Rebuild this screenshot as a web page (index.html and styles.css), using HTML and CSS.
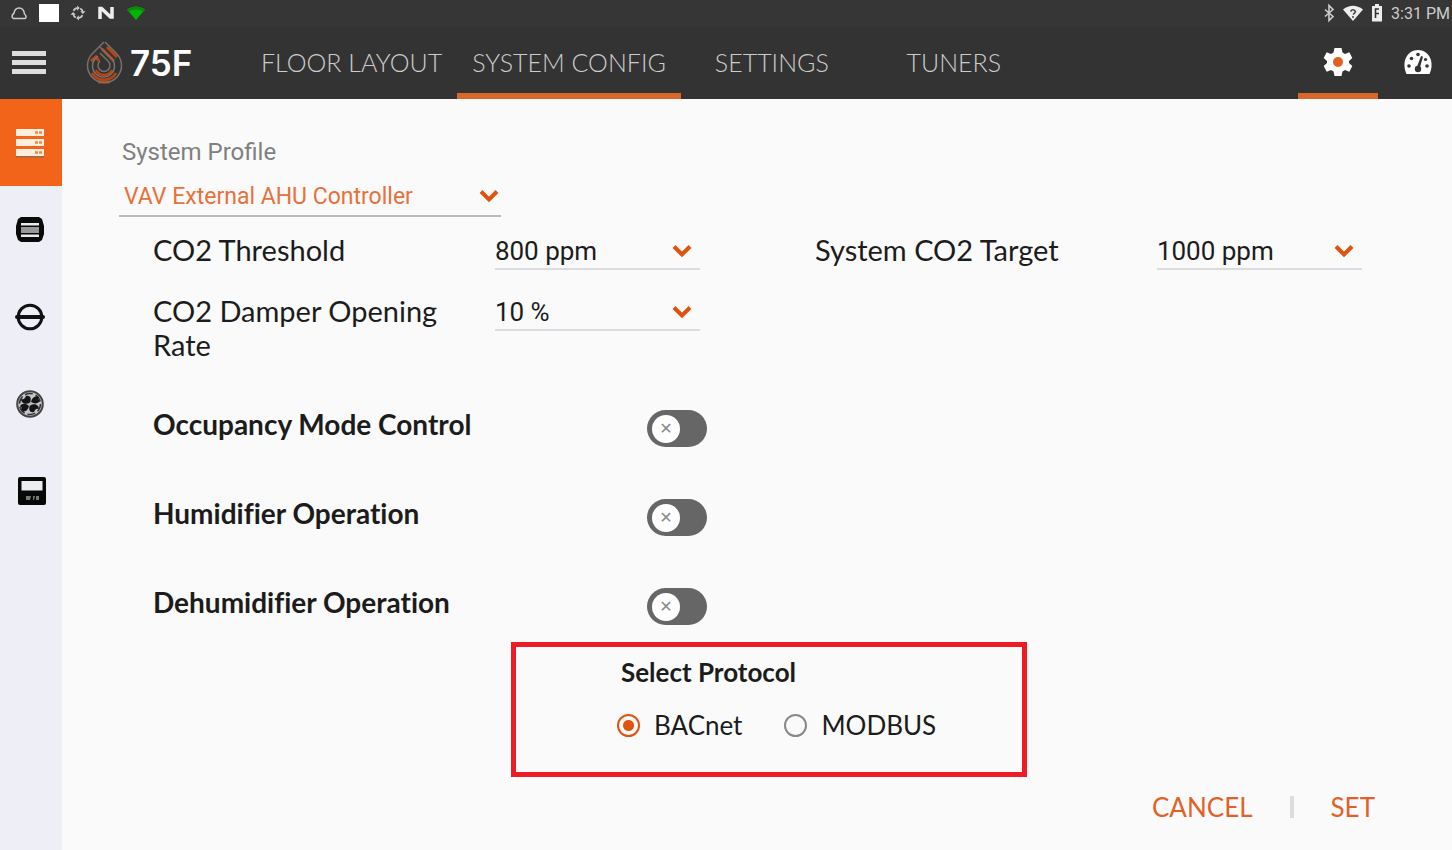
FILE: index.html
```
<!DOCTYPE html>
<html lang="en">
<head>
    <meta charset="utf-8">
    <title>System Config</title>
    <link rel="stylesheet" href="styles.css">
</head>
<body>
    <header>
        <div class="status-bar">
            <div class="status-group">
                <svg width="18" height="18" viewBox="0 0 18 18" fill="none" stroke="#ccc" stroke-width="1.5"><path d="M3.500 14.500h11.500c1.500-.5 1.500-3-.5-4.500C14 6 12 4 9 4S4.500 6 3.800 9.500c-2.300 1.500-2.300 4-.3 5z"/></svg>
                <svg width="20" height="18" viewBox="0 0 20 18"><path d="M0 0h20v18H0z" fill="#fff"/></svg>
                <svg width="16" height="18" viewBox="0 0 18 18" fill="none" stroke="#ccc" stroke-width="2"><path d="M4 6.500C5 4.500 6.500 3.500 8 3.500M11.500 4c1.500.8 2.500 2 2.800 3.500M14 11.500c-1 2-2.500 3-4 3M6.500 14C5 13.200 4 12 3.700 10.500"/><path d="M8 .5l3 3-3 3zM17.500 7l-3 3-3-3zM10 17.500l-3-3 3-3zM.5 11l3-3 3 3z" fill="#ccc" stroke="none"/></svg>
                <svg width="18" height="18" viewBox="0 0 18 18" fill="none" stroke="#eee" stroke-width="3.500"><path d="M3 15V4.500h1.500l9 8.500H15V3"/></svg>
                <svg width="20" height="18" viewBox="0 0 20 18"><path d="M1 5.500Q10-.5 19 5.500L10 16z" fill="#04b404"/><path d="M1 5.500Q10-.5 19 5.500l-2 2.300Q10 3 3 7.800z" fill="#0a8a0a"/></svg>
            </div>
            <div class="status-group right">
                <svg width="12" height="18" viewBox="0 0 12 18" fill="none" stroke="#ccc" stroke-width="1.600"><path d="M2 5.500l8 7-4 4v-15l4 4-8 7"/></svg>
                <svg width="20" height="18" viewBox="0 0 20 18"><path d="M0 5.500Q10-2 20 5.500L10 17z" fill="#eee"/><path d="M7.500 7.500Q10 4 12.500 7.500 12 9 10 10.500M10 12v2" fill="none" stroke="#444" stroke-width="1.500"/></svg>
                <svg width="12" height="18" viewBox="0 0 12 18"><path d="M1 2h3V0h4v2h3v15.500H1z" fill="#eee"/><path d="M8 5H4.500v4.500H8M4.500 9.500V14" fill="none" stroke="#333" stroke-width="1.600"/></svg>
                <span>3:31 PM</span>
            </div>
        </div>
        <div class="toolbar">
            <button class="menu" aria-label="Menu"><span></span><span></span><span></span></button>
            <a class="logo" href="#">
                <svg width="36" height="44" viewBox="0 0 36 44" fill="none">
                    <g stroke="#bd4212">
                        <path d="M15 8l12 12M20 6l10 10" stroke-width="3"/>
                        <path d="M4 20l5-4 3 4" stroke-width="3"/>
                        <path d="M5 32a14 14 0 0 0 24 0M9 29a9 9 0 0 0 16 0" stroke-width="2.500"/>
                        <path d="M11 41h12" stroke-width="3"/>
                    </g>
                    <g stroke="#77706c" stroke-width="1.500">
                        <path d="M17 1L6 12a17 17 0 1 0 23 0L18 1"/>
                        <path d="M13 6l12 12a11 11 0 1 1-17 0l3-3"/>
                        <path d="M13 12l8 8a6 6 0 1 1-8 0"/>
                    </g>
                </svg>
                <span>75F</span>
            </a>
            <nav class="tabs">
                <a href="#">FLOOR LAYOUT</a>
                <a href="#" class="active">SYSTEM CONFIG</a>
                <a href="#">SETTINGS</a>
                <a href="#">TUNERS</a>
            </nav>
            <div class="actions">
                <button class="active" aria-label="Configuration">
                    <svg width="28" height="28" viewBox="0 0 28 28"><path d="M10.500 0h7l1 4.500 2.500 1.500 4.300-1.700 3 5.700L25 13v2l3.300 3-3 5.700L21 22l-2.500 1.500-1 4.500h-7l-1-4.500L7 22l-4.300 1.700-3-5.700L3 15v-2l-3.300-3 3-5.700L7 6l2.500-1.500z" fill="#fff"/><circle cx="14" cy="14" r="5" fill="#e0601f"/></svg>
                </button>
                <button aria-label="Dashboard">
                    <svg width="28" height="24" viewBox="0 0 28 24"><path d="M2.500 24C-3 12 3 0 14 0s17 12 11.500 24z" fill="#fff"/><g fill="#333"><circle cx="5" cy="16" r="1.800"/><circle cx="7.500" cy="8.500" r="1.800"/><circle cx="14" cy="4.500" r="1.800"/><circle cx="23" cy="16" r="1.800"/><circle cx="21.500" cy="9.500" r="1.600"/><circle cx="14" cy="19" r="3.200"/><path d="M12.500 18l4.500-12 2 .7L15.500 19z"/></g></svg>
                </button>
            </div>
        </div>
    </header>

    <div class="page">
        <nav class="sidebar">
            <a href="#" class="active" aria-label="System">
                <svg width="28" height="30" viewBox="0 0 28 30"><path d="M0 1h28v7H0zM0 11h28v7H0zM0 21h28v7H0z" fill="#ffeede"/><path d="M0 28h28v1.500H0z" fill="#9b6b45"/><path d="M19 4.500h3m1 0h3M19 14.500h3m1 0h3M19 24.500h3m1 0h3" stroke="#e58b4e" stroke-width="2.500"/></svg>
            </a>
            <a href="#" aria-label="Equipment">
                <svg width="28" height="28" viewBox="0 0 28 28"><path d="M5 1h18l3 2 2 7v8l-2 6-3 2H5l-3-2-2-6v-8l2-7z" fill="#0a0a0a"/><path d="M5 7h18v2.500H5zM5 18.500h18V21H5z" fill="#e8eaec"/><path d="M5 11h18v6H5z" fill="#999"/></svg>
            </a>
            <a href="#" aria-label="Damper">
                <svg width="28" height="28" viewBox="0 0 28 28" fill="none" stroke="#111"><circle cx="14" cy="14" r="11.800" stroke-width="3"/><path d="M1 14h26" stroke-width="4" stroke-linecap="round"/></svg>
            </a>
            <a href="#" aria-label="Fan">
                <svg width="28" height="28" viewBox="0 0 28 28"><circle cx="14" cy="14" r="12.800" fill="#c6c6ca" stroke="#444" stroke-width="2"/><circle cx="14" cy="14" r="10.500" fill="none" stroke="#333" stroke-width="1.500" stroke-dasharray="8 3"/><path d="M14 13C9 15 5 13 5 9c3 1 4-1 5-3 4-1 6 2 4 7zM15 12c1-5 5-7 8-5-1 2-1 3 1 4-2 3-6 3-9 1zM14 15c5-2 9 0 9 4-3-1-4 1-5 3-4 1-6-2-4-7zM13 16c-1 5-5 7-8 4 1-1 1-3-1-4 2-3 6-3 9 0z" fill="#151515"/><circle cx="14" cy="14" r="1.500" fill="#bbb"/></svg>
            </a>
            <a href="#" class="thermostat" aria-label="Thermostat">
                <svg width="28" height="28" viewBox="0 0 28 28"><rect width="28" height="28" rx="2" fill="#080808"/><path d="M3.500 4h21v9.500h-21z" fill="#eceef2"/><path d="M8 19h5l-1 4H8zM15 19h2l-1 4h-1zM18 19h3v4h-3z" fill="#777"/></svg>
            </a>
        </nav>

        <main>
            <div class="profile">
                <label for="profile">System Profile</label>
                <div class="select-box">
                    <select id="profile"><option>VAV External AHU Controller</option></select>
                    <svg class="chevron" width="20" height="14" viewBox="0 0 20 14"><path d="M2 2.500l8 8 8-8"/></svg>
                </div>
            </div>

            <div class="settings">
                <div class="field">
                    <label for="threshold">CO2 Threshold</label>
                    <div class="select-box">
                        <select id="threshold"><option>800 ppm</option></select>
                        <svg class="chevron" width="20" height="14" viewBox="0 0 20 14"><path d="M2 2.500l8 8 8-8"/></svg>
                    </div>
                </div>
                <div class="field">
                    <label for="target">System CO2 Target</label>
                    <div class="select-box">
                        <select id="target"><option>1000 ppm</option></select>
                        <svg class="chevron" width="20" height="14" viewBox="0 0 20 14"><path d="M2 2.500l8 8 8-8"/></svg>
                    </div>
                </div>
                <div class="field">
                    <label for="rate">CO2 Damper Opening Rate</label>
                    <div class="select-box">
                        <select id="rate"><option>10 %</option></select>
                        <svg class="chevron" width="20" height="14" viewBox="0 0 20 14"><path d="M2 2.500l8 8 8-8"/></svg>
                    </div>
                </div>
            </div>

            <div class="toggles">
                <div class="toggle-row">
                    <label for="occupancy">Occupancy Mode Control</label>
                    <input type="checkbox" class="toggle" id="occupancy">
                </div>
                <div class="toggle-row">
                    <label for="humidifier">Humidifier Operation</label>
                    <input type="checkbox" class="toggle" id="humidifier">
                </div>
                <div class="toggle-row">
                    <label for="dehumidifier">Dehumidifier Operation</label>
                    <input type="checkbox" class="toggle" id="dehumidifier">
                </div>
            </div>

            <div class="protocol" role="radiogroup" aria-labelledby="protocol-title">
                <h3 id="protocol-title">Select Protocol</h3>
                <div class="options">
                    <label><input type="radio" name="protocol" checked>BACnet</label>
                    <label><input type="radio" name="protocol">MODBUS</label>
                </div>
            </div>

            <div class="buttons">
                <button>CANCEL</button>
                <span class="divider"></span>
                <button>SET</button>
            </div>
        </main>
    </div>
</body>
</html>
```
FILE: styles.css
```
* {
    margin: 0;
    padding: 0;
    box-sizing: border-box;
}

body {
    min-height: 100vh;
    display: flex;
    flex-direction: column;
    background: #fafafa;
    color: #1c1c1c;
    font-family: Lato, sans-serif;
    font-variant-ligatures: none;
}

svg {
    display: block;
    overflow: visible;
}

a {
    text-decoration: none;
}

button {
    background: none;
    border: none;
    font-family: inherit;
    cursor: pointer;
}

/* header */
header {
    background: #333;
}

.status-bar {
    height: 26px;
    padding: 0 2px 0 10px;
    display: flex;
    align-items: center;
    justify-content: space-between;
    background: #363636;
}

.status-group {
    display: flex;
    align-items: center;
    gap: 11px;
}

.status-group.right {
    gap: 8px;
    color: #ccc;
    font: 16px Roboto, sans-serif;
}

.toolbar {
    height: 73px;
    display: flex;
    align-items: stretch;
}

.menu {
    width: 46px;
    padding-left: 12px;
    display: flex;
    flex-direction: column;
    justify-content: center;
    gap: 4px;
}

.menu span {
    height: 5px;
    background: #ddd;
}

.logo {
    width: 200px;
    padding-left: 41px;
    display: flex;
    align-items: center;
    gap: 7px;
    color: #fff;
    font: 600 35px Inter, sans-serif;
}

.tabs {
    display: flex;
}

.tabs a {
    min-width: 182px;
    padding: 0 15px;
    border-bottom: 6px solid transparent;
    color: #ccc;
    font-size: 25px;
    font-weight: 300;
    line-height: 72px;
    text-align: center;
}

.tabs .active,
.actions .active {
    border-color: #d9672b;
}

.actions {
    margin-left: auto;
    display: flex;
}

.actions button {
    width: 80px;
    padding-top: 4px;
    display: flex;
    align-items: center;
    justify-content: center;
    border-bottom: 6px solid transparent;
}

.actions button:last-child {
    width: 74px;
    padding-left: 6px;
}

/* sidebar */
.page {
    flex: 1;
    display: flex;
}

.sidebar {
    width: 62px;
    background: #eeeff6;
}

.sidebar a {
    height: 87px;
    padding-right: 2px;
    display: flex;
    align-items: center;
    justify-content: center;
}

.sidebar .active {
    background: #f26419;
}

.sidebar .thermostat {
    padding-left: 4px;
}

/* content */
main {
    flex: 1;
    padding: 36px 77px 22px 57px;
    display: flex;
    flex-direction: column;
}

.profile {
    max-width: 382px;
}

.profile label {
    display: block;
    padding-left: 3px;
    color: #808080;
    font: 24px/34px Roboto, sans-serif;
}

.select-box {
    display: grid;
    align-items: center;
    border-bottom: 2px solid #dcdce0;
}

.select-box select,
.select-box .chevron {
    grid-area: 1 / 1;
}

.select-box select {
    width: 100%;
    height: 35px;
    appearance: none;
    background: none;
    border: none;
    color: #1c1c1c;
    font: 26px Roboto, sans-serif;
}

.chevron {
    justify-self: end;
    margin-right: 8px;
    pointer-events: none;
    fill: none;
    stroke: #e0530f;
    stroke-width: 4;
}

.profile .select-box {
    padding-top: 8px;
    border-color: #bbb;
}

.profile select {
    height: 38px;
    padding-left: 5px;
    color: #e8703a;
    font-size: 23px;
}

.profile .chevron {
    margin-right: 2px;
}

.settings {
    margin: 16px 13px 0 34px;
    display: grid;
    grid-template-columns: 1fr 1fr;
    gap: 24px 115px;
}

.field {
    display: grid;
    grid-template-columns: 5fr 3fr;
    align-items: start;
}

.field label {
    padding-right: 50px;
    font-size: 29px;
    line-height: 34px;
}

.toggles {
    max-width: 554px;
    margin: 47px 0 0 34px;
    display: flex;
    flex-direction: column;
    gap: 50px;
}

.toggle-row {
    display: flex;
    align-items: center;
    justify-content: space-between;
}

.toggle-row label {
    padding-bottom: 8px;
    font-size: 28px;
    font-weight: 700;
    line-height: 31px;
}

.toggle {
    width: 60px;
    height: 37px;
    padding-left: 5px;
    appearance: none;
    display: flex;
    align-items: center;
    background: #666;
    border-radius: 19px;
}

.toggle::before {
    content: "✕";
    width: 28px;
    height: 28px;
    background: #fff;
    border-radius: 50%;
    color: #888;
    font: 16px/28px "DejaVu Sans", sans-serif;
    text-align: center;
}

.toggle:checked {
    padding-left: 27px;
    background: #e0530f;
}

.protocol {
    width: 516px;
    min-height: 135px;
    margin: 16px 0 0 392px;
    padding: 9px 0 0 101px;
    border: 5px solid #ed1c24;
}

.protocol h3 {
    padding-left: 4px;
    font-size: 26px;
    line-height: 32px;
}

.options {
    margin-top: 21px;
    display: flex;
    gap: 42px;
}

.options label {
    display: flex;
    align-items: center;
    gap: 14px;
    font-size: 26px;
    line-height: 32px;
}

.options input {
    width: 23px;
    height: 23px;
    appearance: none;
    border: 2px solid #888;
    border-radius: 50%;
}

.options input:checked {
    border-color: #e0530f;
    background: radial-gradient(circle, #e0530f 5px, transparent 6px);
}

.buttons {
    margin-top: auto;
    display: flex;
    align-items: center;
    justify-content: flex-end;
    gap: 37px;
}

.buttons button {
    color: #e0622a;
    font-size: 26px;
    line-height: 42px;
}

.divider {
    width: 4px;
    height: 22px;
    background: #ddd;
}
```
